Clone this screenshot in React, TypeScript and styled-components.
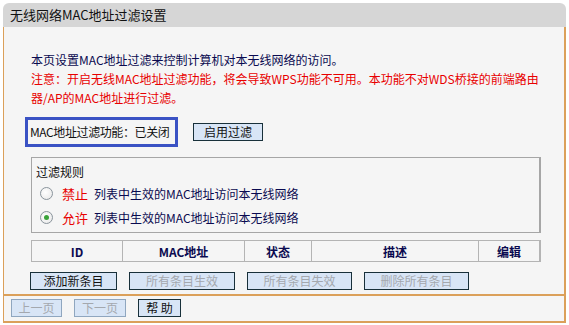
import React from 'react'
import styled, { createGlobalStyle } from 'styled-components'

const cjk = '"Noto Sans CJK SC", "DejaVu Sans", sans-serif'
const navy = '#0a0a50'
const orange = '#dba05a'

const Global = createGlobalStyle`
  html, body { margin: 0; padding: 0; background: #ffffff; }
  body { font-family: ${cjk}; font-size: 12px; color: ${navy}; }
`

const Panel = styled.div`
  width: 563px;
  margin: 3px 0 0 3px;
`

const TitleBar = styled.div`
  height: 24px;
  line-height: 24px;
  padding-left: 7px;
  background: #d6d6d6;
  border-radius: 6px 6px 0 0;
  font-size: 13px;
  color: #111;
`

const Body = styled.div`
  background: #f5f5f5;
  border-left: 1px solid ${orange};
  border-right: 2px solid ${orange};
  border-bottom: 2px solid ${orange};
`

const Main = styled.div`
  padding: 23px 0 4px 27px;
`

const Para = styled.p<{ $red?: boolean }>`
  margin: 0;
  line-height: 19px;
  white-space: nowrap;
  color: ${p => (p.$red ? '#e80000' : navy)};
`

const StatusRow = styled.div`
  display: flex;
  align-items: center;
  margin: 10px 0 0 -6px;
`

const StatusBox = styled.div`
  width: 145px;
  height: 24px;
  line-height: 24px;
  padding-left: 2px;
  border: 3px solid #3a52c4;
  color: #111;
  white-space: nowrap;
  letter-spacing: -0.4px;
`

const Btn = styled.button<{ $w: number; $off?: boolean; $soft?: boolean }>`
  width: ${p => p.$w}px;
  height: 18px;
  padding: 0;
  background: #d8e5f6;
  border: 1px solid ${p => (p.$soft ? '#8fa6bf' : '#18303a')};
  font-family: ${cjk};
  font-size: 12px;
  line-height: 16px;
  color: ${p => (p.$off ? '#a4a8ae' : '#111')};
  cursor: default;
`

const Fieldset = styled.div`
  width: 510px;
  height: 76px;
  margin-top: 10px;
  border: 1px solid #a6a6a6;
  border-right-width: 2px;
  padding: 5px 0 0 4px;
  box-sizing: border-box;
`

const Legend = styled.div`
  line-height: 18px;
  color: #111;
`

const RuleRow = styled.div`
  display: flex;
  align-items: center;
  height: 24px;
  padding-left: 4px;
  white-space: nowrap;
`

const Radio = styled.span<{ $on?: boolean }>`
  width: 11px;
  height: 11px;
  border-radius: 50%;
  border: 1px solid #8a949c;
  background: radial-gradient(circle at 40% 40%, #ffffff 0%, #e6e6e6 100%);
  margin-right: 9px;
  display: flex;
  align-items: center;
  justify-content: center;
  &::after {
    content: '';
    width: 5px;
    height: 5px;
    border-radius: 50%;
    background: ${p => (p.$on ? '#3aa33a' : 'transparent')};
  }
`

const Red = styled.span`
  color: #e80000;
  margin-right: 6px;
  font-size: 13px;
`

const Table = styled.div`
  display: grid;
  grid-template-columns: 90px 122px 67px 167px 1fr;
  width: 510px;
  height: 22px;
  margin-top: 7px;
  border: 1px solid #b4b4b4;
  border-right-width: 2px;
  box-sizing: border-box;
`

const Th = styled.div`
  display: flex;
  align-items: center;
  justify-content: center;
  border-left: 1px solid #b4b4b4;
  font-weight: bold;
  color: ${navy};
  &:first-child { border-left: none; }
`

const BtnRow = styled.div`
  display: flex;
  gap: 12px;
  margin: 10px 0 0 -1px;
`

const Pager = styled.div`
  display: flex;
  gap: 12px;
  padding: 3px 0 4px 7px;
  border-top: 2px solid ${orange};
`

export default function App() {
  return (
    <>
      <Global />
      <Panel>
        <TitleBar>无线网络MAC地址过滤设置</TitleBar>
        <Body>
          <Main>
            <Para>本页设置MAC地址过滤来控制计算机对本无线网络的访问。</Para>
            <Para $red>
              注意：开启无线MAC地址过滤功能，将会导致WPS功能不可用。本功能不对WDS桥接的前端路由
            </Para>
            <Para $red>器/AP的MAC地址进行过滤。</Para>
            <StatusRow>
              <StatusBox>MAC地址过滤功能：已关闭</StatusBox>
              <Btn $w={70} style={{ marginLeft: 15 }}>启用过滤</Btn>
            </StatusRow>
            <Fieldset>
              <Legend>过滤规则</Legend>
              <RuleRow>
                <Radio />
                <Red>禁止</Red>列表中生效的MAC地址访问本无线网络
              </RuleRow>
              <RuleRow>
                <Radio $on />
                <Red>允许</Red>列表中生效的MAC地址访问本无线网络
              </RuleRow>
            </Fieldset>
            <Table>
              <Th>ID</Th>
              <Th>MAC地址</Th>
              <Th>状态</Th>
              <Th>描述</Th>
              <Th>编辑</Th>
            </Table>
            <BtnRow>
              <Btn $w={87}>添加新条目</Btn>
              <Btn $w={106} $off>所有条目生效</Btn>
              <Btn $w={105} $off>所有条目失效</Btn>
              <Btn $w={105} $off>删除所有条目</Btn>
            </BtnRow>
          </Main>
          <Pager>
            <Btn $w={51} $off $soft>上一页</Btn>
            <Btn $w={52} $off $soft>下一页</Btn>
            <Btn $w={43}>帮 助</Btn>
          </Pager>
        </Body>
      </Panel>
    </>
  )
}
